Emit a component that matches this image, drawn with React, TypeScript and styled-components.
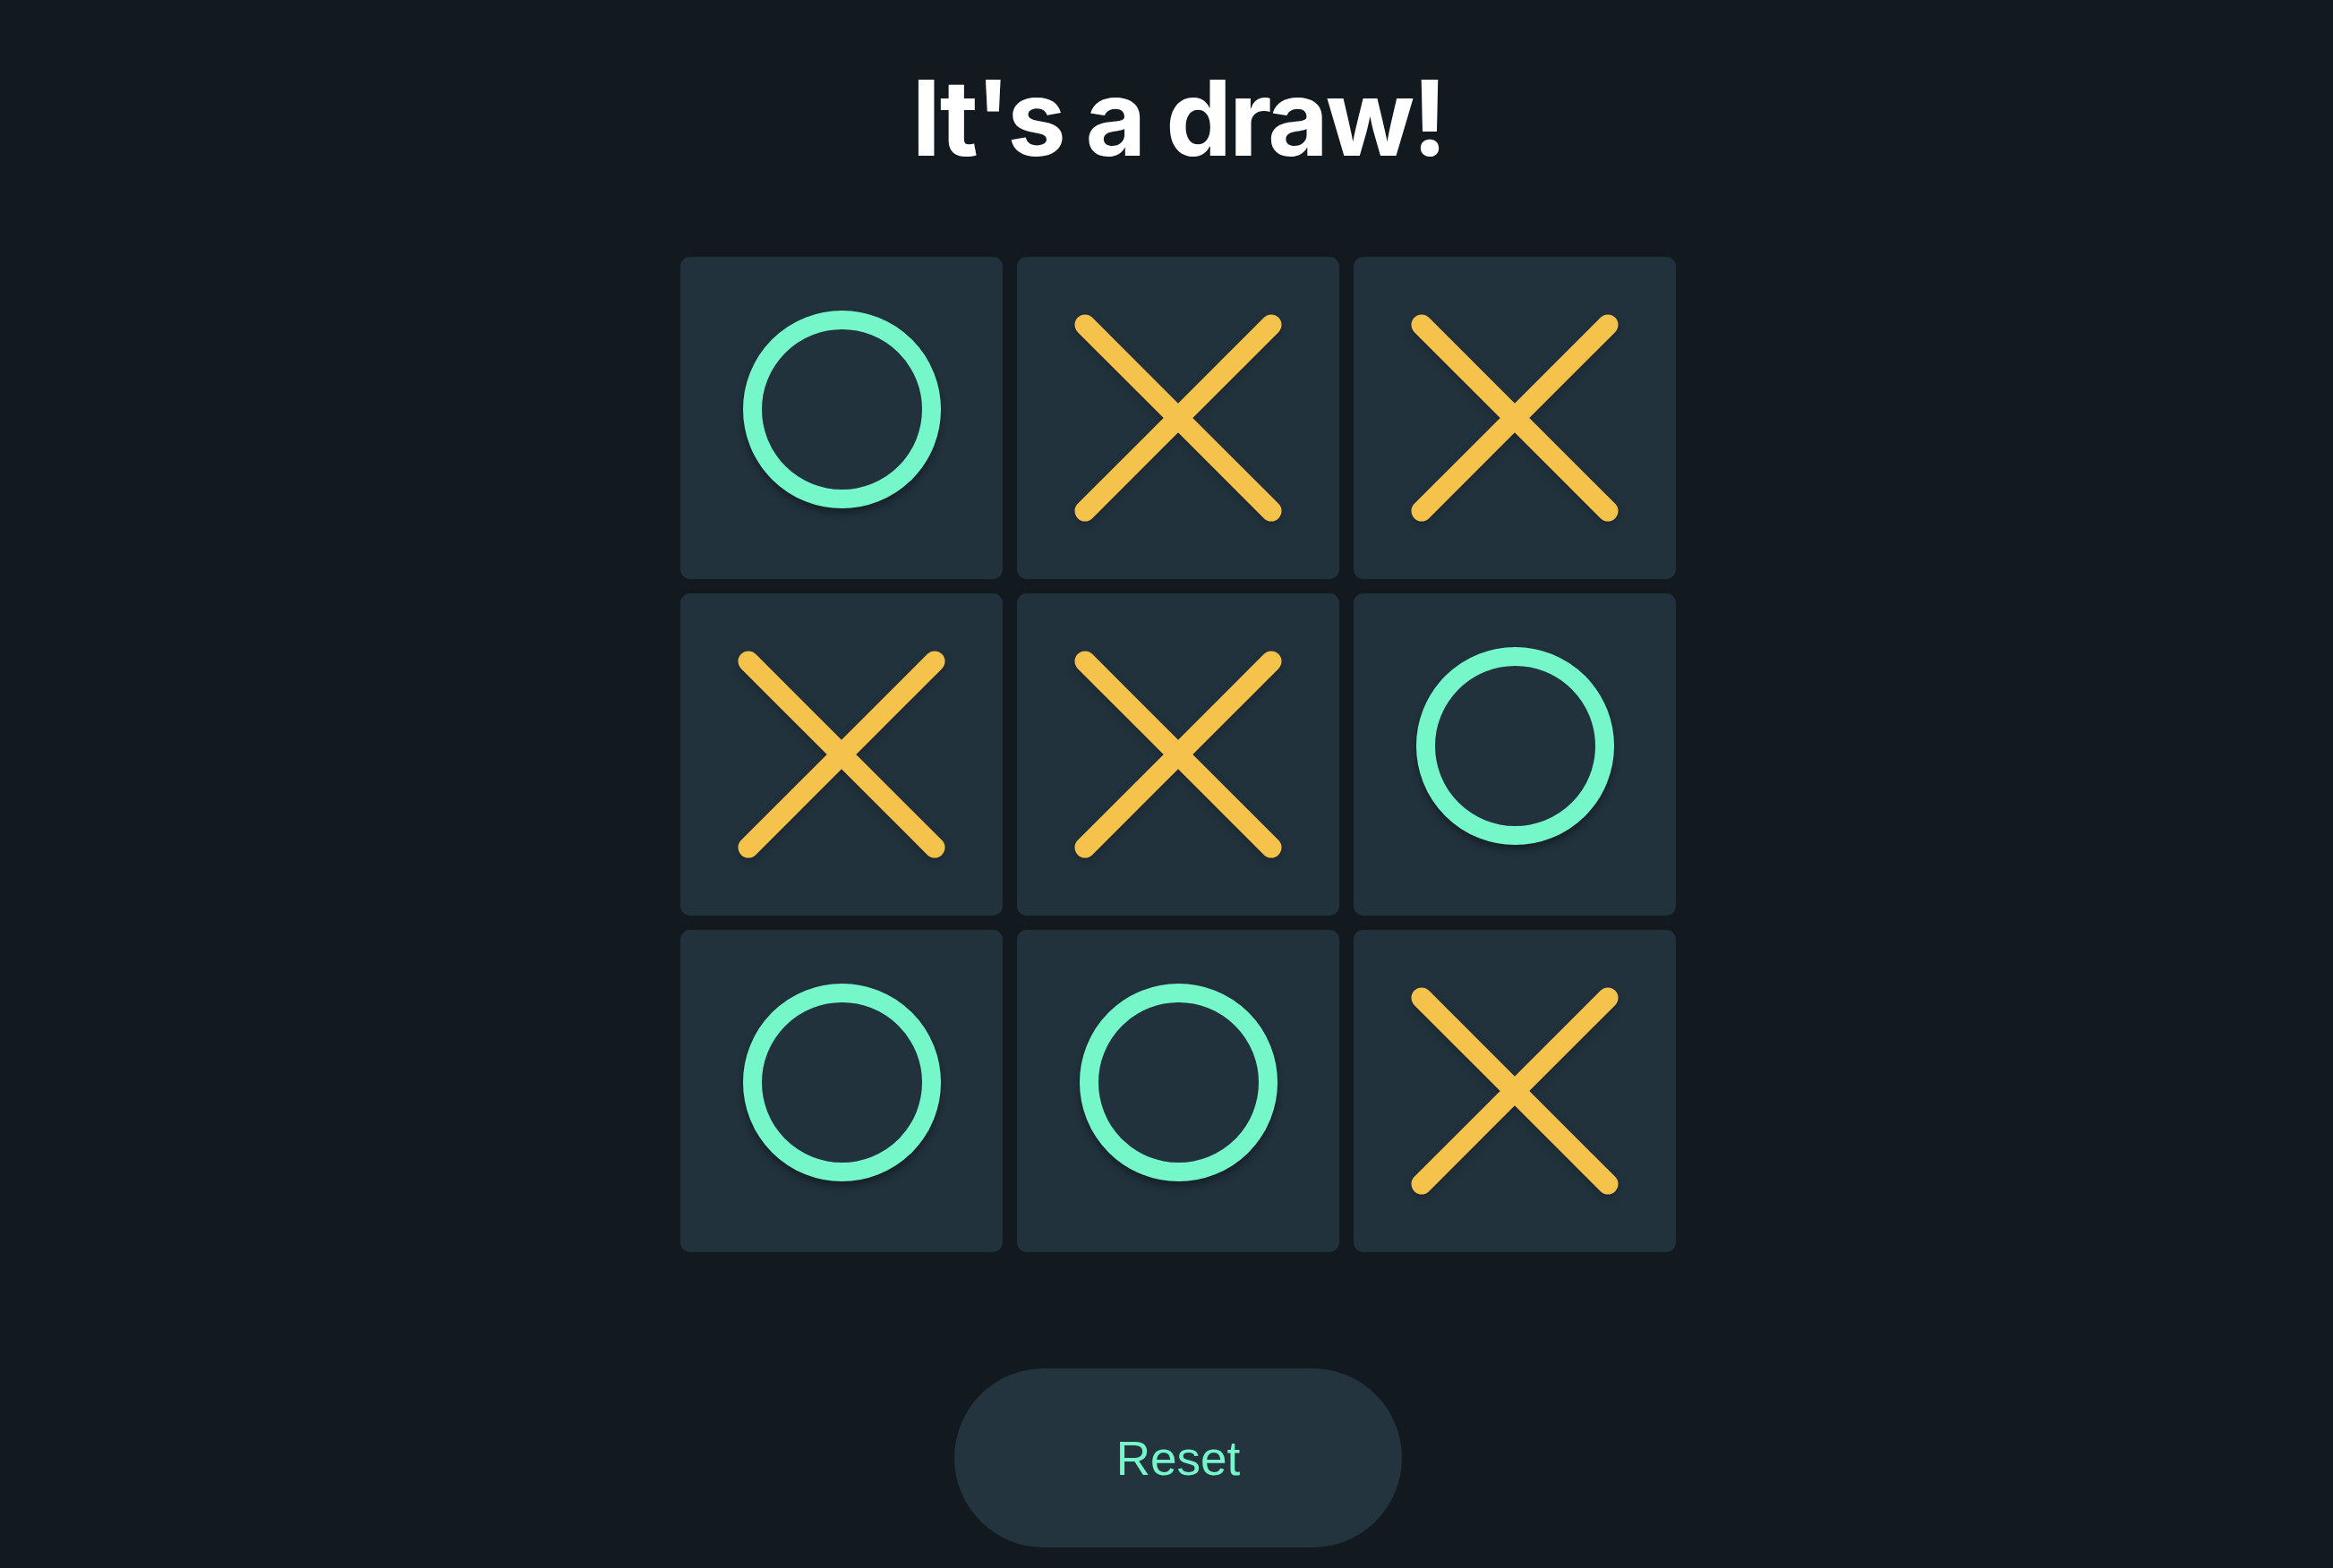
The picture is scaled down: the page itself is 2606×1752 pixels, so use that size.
import styled, { createGlobalStyle } from "styled-components";

type Mark = "X" | "O";

const board: Mark[] = ["O", "X", "X", "X", "X", "O", "O", "O", "X"];

const GlobalStyle = createGlobalStyle`
  html, body {
    margin: 0;
    padding: 0;
    background: #121a20;
  }
  body {
    min-height: 100vh;
    font-family: Inter, "Noto Sans", sans-serif;
  }
`;

const Page = styled.main`
  display: flex;
  flex-direction: column;
  align-items: center;
  padding: 73px 0 0 26px;
`;

const Title = styled.h1`
  margin: 0;
  color: #ffffff;
  font-family: Inter, "Noto Sans", sans-serif;
  font-weight: 700;
  font-size: 117px;
  line-height: 117px;
  letter-spacing: -3px;
`;

const Grid = styled.div`
  display: grid;
  grid-template-columns: repeat(3, 360px);
  grid-auto-rows: 360px;
  gap: 16px;
  margin-top: 97px;
`;

const Cell = styled.button`
  display: flex;
  align-items: center;
  justify-content: center;
  padding: 0;
  border: none;
  border-radius: 11px;
  background: #22323d;
  cursor: pointer;
`;

const Circle = styled.div`
  box-sizing: border-box;
  width: 221px;
  height: 221px;
  margin-top: -20px;
  border: 21px solid #75f7ca;
  border-radius: 50%;
  box-shadow: 0 6px 8px rgba(8, 14, 18, 0.45);
`;

const Cross = styled.svg`
  display: block;
  width: 232px;
  height: 232px;
  overflow: visible;
  filter: drop-shadow(0 4px 5px rgba(8, 14, 18, 0.3));
`;

const ResetButton = styled.button`
  margin-top: 130px;
  width: 500px;
  height: 200px;
  border: none;
  border-radius: 100px;
  background: #23343e;
  color: #75f7ca;
  font-family: "Liberation Sans", Arial, sans-serif;
  font-size: 53px;
  cursor: pointer;
`;

const XMark = () => (
  <Cross width="232" height="232" viewBox="0 0 232 232">
    <path
      d="M12 12 L220 220 M220 12 L12 220"
      fill="none"
      stroke="#f5c34b"
      strokeWidth="23"
      strokeLinecap="round"
    />
  </Cross>
);

export default function App() {
  return (
    <>
      <GlobalStyle />
      <Page>
        <Title>It's a draw!</Title>
        <Grid>
          {board.map((mark, i) => (
            <Cell key={i}>{mark === "X" ? <XMark /> : <Circle />}</Cell>
          ))}
        </Grid>
        <ResetButton>Reset</ResetButton>
      </Page>
    </>
  );
}
